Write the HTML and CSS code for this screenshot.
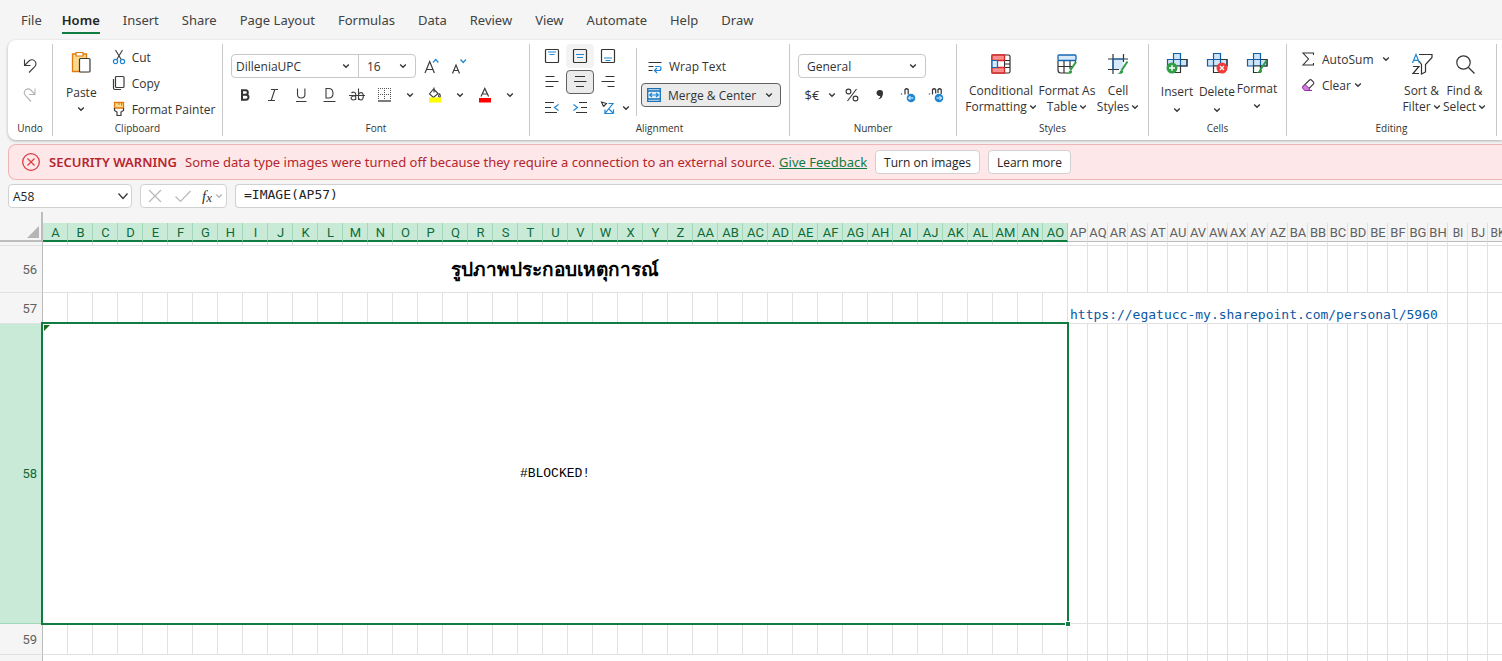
FILE: index.html
```html
<!DOCTYPE html>
<html lang="en">
<head>
<meta charset="utf-8">
<title>Workbook</title>
<link rel="stylesheet" href="styles.css">
</head>
<body>
<svg class="defs" aria-hidden="true">
  <symbol id="chev" viewBox="0 0 8 8"><path d="M1.2 2.5 4 5.3 6.8 2.5" fill="none" stroke="currentColor" stroke-width="1.3"/></symbol>
  <symbol id="cross" viewBox="0 0 22 22"><path d="M7.500 7.500V1.500h7v6H21v6.500H1.500V7.500z" fill="#cfe4f7"/><path d="M7.500 7.500V1.500h7v6H21v6.500H1.500V7.500zM7.500 7.500V14M14.500 7.500V14M7.500 7.500h7" fill="none" stroke="#0f5ea8" stroke-width="1.200"/><path d="M7.500 14v6.500h7V14z" fill="#fff" stroke="#333" stroke-width="1.200"/><path d="M14.500 7.500H21V14h-6.500" fill="none" stroke="#333" stroke-width="1.200"/></symbol>
</svg>

<nav class="tabs">
  <button class="tab">File</button>
  <button class="tab tab-active">Home</button>
  <button class="tab">Insert</button>
  <button class="tab">Share</button>
  <button class="tab">Page Layout</button>
  <button class="tab">Formulas</button>
  <button class="tab">Data</button>
  <button class="tab">Review</button>
  <button class="tab">View</button>
  <button class="tab">Automate</button>
  <button class="tab">Help</button>
  <button class="tab">Draw</button>
</nav>

<div class="ribbon">
  <section class="group">
    <div class="controls undo">
      <button class="tool" aria-label="Undo"><svg width="14" height="16" viewBox="0 0 14 16"><path d="M1.500 1.500v6h6M1.500 7.500 6 3c2-1.800 4.500-1.500 5.800 0 1.600 1.800 1.300 4 0 5.600L6 14.500" fill="none" stroke="#3b3b3b" stroke-width="1.100"/></svg></button>
      <button class="tool" aria-label="Redo"><svg width="14" height="16" viewBox="0 0 14 16"><path d="M12 1.500v6H6M12 7.500 7.800 3C6 1.500 4 1.800 2.500 3c-1.600 1.800-1.500 4 0 5.600L8 14.500" fill="none" stroke="#b4b4b4" stroke-width="1.100"/></svg></button>
    </div>
    <h2 class="caption">Undo</h2>
  </section>

  <section class="group">
    <div class="controls clipboard">
      <button class="big paste">
        <svg width="20" height="22" viewBox="0 0 20 22"><path d="M1.500 3h14v17.500h-14z" fill="#fbd98b" stroke="#e07b12" stroke-width="1.300"/><path d="M5 1.500h7v3.500H5z" fill="#fff" stroke="#e07b12" stroke-width="1.200"/><rect x="8.500" y="7.500" width="10.500" height="13.500" rx="1" fill="#fff" stroke="#3b3b3b" stroke-width="1.200"/></svg>
        <span>Paste</span>
        <svg class="chev"><use href="#chev"/></svg>
      </button>
      <div class="stack">
        <button class="row-tool"><svg width="14" height="16" viewBox="0 0 14 16"><path d="M3.500 1 9.500 11M10.500 1 4.500 11" stroke="#3b3b3b" stroke-width="1.100"/><circle cx="3.500" cy="12.500" r="2.100" fill="none" stroke="#1f86d2" stroke-width="1.200"/><circle cx="10.500" cy="12.500" r="2.100" fill="none" stroke="#1f86d2" stroke-width="1.200"/></svg>Cut</button>
        <button class="row-tool"><svg width="14" height="16" viewBox="0 0 14 16"><rect x="3.500" y="1.500" width="8.500" height="11" rx="1" fill="none" stroke="#3b3b3b" stroke-width="1.200"/><path d="M1.500 4v9q0 1.500 1.500 1.500h6" fill="none" stroke="#3b3b3b" stroke-width="1.200"/></svg>Copy</button>
        <button class="row-tool"><svg width="14" height="16" viewBox="0 0 14 16"><path d="M2.500 1.500h9v5.500h-9z" fill="#fbd98b" stroke="#e07b12" stroke-width="1.300"/><path d="M7 1.500v2.500M9.500 1.500v3" stroke="#e07b12"/><path d="M2.500 7v2.500L5 11v3.500h4V11l2.500-1.500V7" fill="none" stroke="#3b3b3b" stroke-width="1.200"/></svg>Format Painter</button>
      </div>
    </div>
    <h2 class="caption">Clipboard</h2>
  </section>

  <section class="group">
    <div class="controls two-rows">
      <div class="line">
        <div class="combo">
          <label class="pick pick-font"><select aria-label="Font name"><option>DilleniaUPC</option></select><svg class="chev"><use href="#chev"/></svg></label>
          <label class="pick pick-size"><select aria-label="Font size"><option>16</option></select><svg class="chev"><use href="#chev"/></svg></label>
        </div>
        <button class="tool" aria-label="Increase font size"><svg width="18" height="18" viewBox="0 0 18 18"><path d="M2 16 6.700 4.500 11.400 16M3.600 12.500h6.200" fill="none" stroke="#3b3b3b" stroke-width="1.200"/><path d="m10 5.500 2.700-3 2.700 3" fill="none" stroke="#1f86d2" stroke-width="1.200"/></svg></button>
        <button class="tool" aria-label="Decrease font size"><svg width="18" height="18" viewBox="0 0 18 18"><path d="M1.500 16.500 5 8 8.500 16.500M2.800 13.500h4.500" fill="none" stroke="#3b3b3b" stroke-width="1.200"/><path d="m9.500 2.500 2.700 3 2.700-3" fill="none" stroke="#1f86d2" stroke-width="1.200"/></svg></button>
      </div>
      <div class="line">
        <button class="tool" aria-label="Bold"><svg width="16" height="16" viewBox="0 0 16 16"><path d="M5 3.200h3.500a2.200 2.200 0 0 1 0 4.600H5zM5 7.800h4a2.400 2.400 0 0 1 0 5H5z" fill="none" stroke="#333" stroke-width="2"/></svg></button>
        <button class="tool" aria-label="Italic"><svg width="16" height="16" viewBox="0 0 16 16"><path d="M6 2.500h7M3 13.500h7M9.800 2.500l-3.600 11" fill="none" stroke="#3b3b3b" stroke-width="1.100"/></svg></button>
        <button class="tool" aria-label="Underline"><svg width="16" height="16" viewBox="0 0 16 16"><path d="M4.500 1.500v6q0 3.500 3.700 3.500t3.700-3.500v-6M3 14.500h10.500" fill="none" stroke="#3b3b3b" stroke-width="1.100"/></svg></button>
        <button class="tool" aria-label="Double underline"><svg width="16" height="16" viewBox="0 0 16 16"><path d="M5 1.500h2.500q4.500 0 4.500 4.700T7.500 11H5zM2.500 14.500h12" fill="none" stroke="#3b3b3b" stroke-width="1.100"/></svg></button>
        <button class="tool" aria-label="Strikethrough"><svg width="16" height="16" viewBox="0 0 16 16"><path d="M0 8.500h16M2.500 6q1-1 2.500-.8 1.700.2 1.700 2V13M6.700 8.700Q2 9 2 11.200 2.300 13 4.500 13q1.800-.2 2.200-1.700M9.500 1.500V13M9.500 7.500q.8-2 2.500-2 2.300.2 2.300 3.700T12 13q-1.800 0-2.500-2" fill="none" stroke="#3b3b3b" stroke-width="1.100"/></svg></button>
        <button class="tool" aria-label="Borders"><svg width="16" height="16" viewBox="0 0 16 16"><path d="M1.500 1v12M7.500 1v12M13.500 1v12M1 1.500h13M1 7.500h13" stroke="#555" stroke-dasharray="1 1"/><path d="M1 14h13" stroke="#333" stroke-width="1.300"/></svg></button>
        <button class="drop" aria-label="Border options"><svg class="chev"><use href="#chev"/></svg></button>
        <button class="tool" aria-label="Fill color"><svg width="16" height="16" viewBox="0 0 16 16"><path d="M7 .500v5M6.500 2 11 6.500 6.500 10.500 2.500 7zM12.500 6.500q1.300 2 .8 3.200-.8.900-1.700 0-.4-1.200.9-3.200" fill="none" stroke="#3b3b3b" stroke-width="1.100"/><path d="M2 10.500h12v5H2z" fill="#ff0"/></svg></button>
        <button class="drop" aria-label="Fill options"><svg class="chev"><use href="#chev"/></svg></button>
        <button class="tool" aria-label="Font color"><svg width="16" height="16" viewBox="0 0 16 16"><path d="M4 9.500 7.800 1.500l3.800 8M5.500 7h4.800" fill="none" stroke="#3b3b3b" stroke-width="1.200"/><path d="M2 11h12v4.500H2z" fill="#f00"/></svg></button>
        <button class="drop" aria-label="Font color options"><svg class="chev"><use href="#chev"/></svg></button>
      </div>
    </div>
    <h2 class="caption">Font</h2>
  </section>

  <section class="group">
    <div class="controls alignment">
      <div class="align-grid">
        <button class="tool" aria-label="Top align"><svg width="16" height="16" viewBox="0 0 16 16"><rect x="1.500" y="1.500" width="13" height="13" rx="1" fill="none" stroke="#333" stroke-width="1.200"/><path d="M4 4h8M5.500 6.500h5" stroke="#1f86d2" stroke-width="1.200"/></svg></button>
        <button class="tool tool-hover" aria-label="Middle align"><svg width="16" height="16" viewBox="0 0 16 16"><rect x="1.500" y="1.500" width="13" height="13" rx="1" fill="none" stroke="#333" stroke-width="1.200"/><path d="M4 6.500h8M5 9.500h6" stroke="#1f86d2" stroke-width="1.200"/></svg></button>
        <button class="tool" aria-label="Bottom align"><svg width="16" height="16" viewBox="0 0 16 16"><rect x="1.500" y="1.500" width="13" height="13" rx="1" fill="none" stroke="#333" stroke-width="1.200"/><path d="M4 10h8M5.500 12.500h5" stroke="#1f86d2" stroke-width="1.200"/></svg></button>
        <button class="tool" aria-label="Align left"><svg width="16" height="16" viewBox="0 0 16 16"><path d="M1.500 2.500h9M1.500 7.500h13M1.500 12.500h8" stroke="#333" stroke-width="1.100"/></svg></button>
        <button class="tool tool-on" aria-label="Center"><svg width="16" height="16" viewBox="0 0 16 16"><path d="M3 2.500h10M2 7.500h12.500M4 12.500h8" stroke="#333" stroke-width="1.100"/></svg></button>
        <button class="tool" aria-label="Align right"><svg width="16" height="16" viewBox="0 0 16 16"><path d="M5.500 2.500h9M1.500 7.500h13M7.500 12.500h7" stroke="#333" stroke-width="1.100"/></svg></button>
        <button class="tool" aria-label="Decrease indent"><svg width="16" height="16" viewBox="0 0 16 16"><path d="M1 2.500h9M1 7.500h6M1 12.500h12" stroke="#333" stroke-width="1.100"/><path d="M14.500 4.500 10.500 7.500l4 3" fill="none" stroke="#1f86d2" stroke-width="1.200"/></svg></button>
        <button class="tool" aria-label="Increase indent"><svg width="16" height="16" viewBox="0 0 16 16"><path d="M7 2.500h8M9 7.500h6M4 12.500h11" stroke="#333" stroke-width="1.100"/><path d="m1.500 4.500 4 3-4 3" fill="none" stroke="#1f86d2" stroke-width="1.200"/></svg></button>
        <button class="tool" aria-label="Orientation"><svg width="16" height="16" viewBox="0 0 16 16"><path d="M3.500 6.500 1.500 2l5 1.500L3.500 6.500" fill="none" stroke="#333" stroke-width="1.100"/><path d="M8.500 3.500h4.500L5 13.500H13.500M8.500 8.500l5 5M13.500 9.500v4M5 9.500v4" fill="none" stroke="#1f86d2" stroke-width="1.200"/></svg></button>
        <button class="drop orient-drop" aria-label="Orientation options"><svg class="chev"><use href="#chev"/></svg></button>
      </div>
      <div class="wrap-merge">
        <button class="row-tool wrap"><svg width="14" height="14" viewBox="0 0 14 14"><path d="M.500 2.500h13M.500 6.500h5M.500 10.500h4" stroke="#333" stroke-width="1.100"/><path d="M7 6.500h4q2 0 2 2t-2 2H7M9 8l-2.500 2.500L9 13" fill="none" stroke="#1f86d2" stroke-width="1.200"/></svg>Wrap Text</button>
        <button class="row-tool merge"><svg width="14" height="14" viewBox="0 0 14 14"><path d="M.700 3h12.600v8H.700z" fill="#e2f0fb"/><path d="M.700.700h12.600v12.600H.700zM.700 3h12.600M.700 11h12.600" fill="none" stroke="#1570b8" stroke-width="1.300"/><path d="M2.500 7h9M5 5 2.700 7 5 9M9 5l2.300 2L9 9" fill="none" stroke="#1f86d2" stroke-width="1.200"/></svg>Merge &amp; Center<svg class="chev"><use href="#chev"/></svg></button>
      </div>
    </div>
    <h2 class="caption">Alignment</h2>
  </section>

  <section class="group">
    <div class="controls two-rows">
      <div class="line">
        <label class="pick pick-number"><select aria-label="Number format"><option>General</option></select><svg class="chev"><use href="#chev"/></svg></label>
      </div>
      <div class="line">
        <button class="tool currency" aria-label="Currency">$€</button>
        <button class="drop drop-slim" aria-label="Currency options"><svg class="chev"><use href="#chev"/></svg></button>
        <button class="tool" aria-label="Percent"><svg width="16" height="16" viewBox="0 0 16 16"><circle cx="4.500" cy="4.500" r="2.400" fill="none" stroke="#333" stroke-width="1.100"/><circle cx="11.500" cy="11.500" r="2.400" fill="none" stroke="#333" stroke-width="1.100"/><path d="M12.500 2 3.500 14" stroke="#333" stroke-width="1.100"/></svg></button>
        <button class="tool" aria-label="Comma style"><svg width="16" height="16" viewBox="0 0 16 16"><path d="M8 3a3 3 0 1 0 .5 5.800Q8 11.200 6 12.500q5-1 5-6.500A3 3 0 0 0 8 3" fill="#333"/></svg></button>
        <button class="tool" aria-label="Increase decimal"><svg width="16" height="16" viewBox="0 0 16 16"><path d="M1.500 6.500v1" stroke="#333" stroke-width="1.300"/><path d="M5 7.500v-5q1.600-1.500 3.200 0V7.500" fill="none" stroke="#333" stroke-width="1.200"/><circle cx="11" cy="11" r="4.300" fill="#1f86d2"/><path d="M13.500 11h-5m2-2-2 2 2 2" fill="none" stroke="#fff"/></svg></button>
        <button class="tool" aria-label="Decrease decimal"><svg width="16" height="16" viewBox="0 0 16 16"><path d="M1.500 6.500v1" stroke="#333" stroke-width="1.300"/><path d="M4.500 7.500v-5q1.600-1.500 3.200 0V6.500M10 6V2.500q1.600-1.500 3.200 0V7" fill="none" stroke="#333" stroke-width="1.200"/><circle cx="11" cy="11" r="4.300" fill="#1f86d2"/><path d="M8.500 11h5m-2-2 2 2-2 2" fill="none" stroke="#fff"/></svg></button>
      </div>
    </div>
    <h2 class="caption">Number</h2>
  </section>

  <section class="group">
    <div class="controls bigs styles-set">
      <button class="big"><svg width="22" height="22" viewBox="0 0 22 22"><rect x="2" y="2" width="18" height="18" rx="1.500" fill="#fff" stroke="#333" stroke-width="1.200"/><path d="M14.500 2v18M14.500 11H20M14.500 7.500H20M14.500 14.500H20" stroke="#333" stroke-width="1.100"/><path d="M2 2h12.500v5.500H2zM2 14.500h12.500V20H2z" fill="#fb8f8f" stroke="#d42a2a" stroke-width="1.300"/><path d="M2 7.500h5.500v7H2z" fill="#d8eafa" stroke="#1468b3" stroke-width="1.200"/></svg><span>Conditional<br>Formatting<svg class="chev"><use href="#chev"/></svg></span></button>
      <button class="big"><svg width="22" height="22" viewBox="0 0 22 22"><path d="M2 7.500V17q0 3 3 3h3V7.500M2 13.500h15M8 20h4M14 7.500V16M19.500 7.500V10" fill="none" stroke="#333" stroke-width="1.200"/><rect x="2" y="2" width="18" height="5.500" rx="1" fill="#d8eafa" stroke="#1468b3" stroke-width="1.300"/><path d="m20 9-5.500 8" stroke="#2f9e44" stroke-width="2"/><path d="M10 20.500q3-.3 3-2.500 1.500-1.700 3 0 .8 3.800-6 2.500" fill="#2f9e44"/></svg><span>Format As<br>Table<svg class="chev"><use href="#chev"/></svg></span></button>
      <button class="big"><svg width="22" height="22" viewBox="0 0 22 22"><path d="M6 6h10.500v10.500H6z" fill="#d8eafa"/><path d="M6 1v20M1 6h20M16.500 1v8M1 16.500h11" stroke="#333" stroke-width="1.200"/><path d="M6 16.500V6h10.500" fill="none" stroke="#1468b3" stroke-width="1.200"/><path d="m20.500 8.500-6 9" stroke="#2f9e44" stroke-width="2"/><path d="M10 20.500q3-.3 3-2.500 1.500-1.700 3 0 .8 3.800-6 2.500" fill="#2f9e44"/></svg><span>Cell<br>Styles<svg class="chev"><use href="#chev"/></svg></span></button>
    </div>
    <h2 class="caption">Styles</h2>
  </section>

  <section class="group">
    <div class="controls bigs cells-set">
      <button class="big"><svg width="22" height="22" viewBox="0 0 22 22"><use href="#cross"/><circle cx="6" cy="16" r="5.500" fill="#2f9e44"/><path d="M6 13v6M3 16h6" stroke="#fff" stroke-width="1.300"/></svg><span>Insert</span><svg class="chev"><use href="#chev"/></svg></button>
      <button class="big"><svg width="22" height="22" viewBox="0 0 22 22"><use href="#cross"/><circle cx="16" cy="16" r="5.500" fill="#ee3b3b"/><path d="m14 14 4 4M18 14l-4 4" stroke="#fff" stroke-width="1.200"/></svg><span>Delete</span><svg class="chev"><use href="#chev"/></svg></button>
      <button class="big big-tight"><svg width="22" height="22" viewBox="0 0 22 22"><use href="#cross"/><path d="m20.500 8.500-6 9" stroke="#2f9e44" stroke-width="2"/><path d="M10 20.500q3-.3 3-2.500 1.500-1.700 3 0 .8 3.800-6 2.500" fill="#2f9e44"/></svg><span>Format</span><svg class="chev"><use href="#chev"/></svg></button>
    </div>
    <h2 class="caption">Cells</h2>
  </section>

  <section class="group">
    <div class="controls editing">
      <div class="stack edit-stack">
        <button class="row-tool sum"><svg width="14" height="16" viewBox="0 0 14 16"><path d="M12.500 4V2H2l5.500 6L2 14h10.500v-2" fill="none" stroke="#333" stroke-width="1.100"/></svg>AutoSum<svg class="chev"><use href="#chev"/></svg></button>
        <button class="row-tool clear"><svg width="14" height="16" viewBox="0 0 14 16"><path d="M2 9.500 8.500 3q1-.8 2 0l2 2q.7 1 0 2L7 12.500z" fill="#fff" stroke="#3b3b3b" stroke-width="1.100"/><path d="m4 7.500 5 4.500-2 1.500H3.500L1.500 11q-.3-1 .5-1.500z" fill="#cf7fd8" stroke="#9b2fae"/><path d="M4 13.500h7" stroke="#9b2fae"/></svg>Clear<svg class="chev"><use href="#chev"/></svg></button>
      </div>
      <button class="big"><svg width="22" height="22" viewBox="0 0 22 22"><path d="M8 1.500h13v3l-6.500 7v7.500l-4 2V11.500L8 8" fill="none" stroke="#333" stroke-width="1.200"/><path d="M1.500 10 5 1.500 8.500 10M2.800 7.300h4.500" fill="none" stroke="#1f86d2" stroke-width="1.200"/><path d="M2 13.500h6L2 20.500h6" fill="none" stroke="#333" stroke-width="1.200"/></svg><span>Sort &amp;<br>Filter<svg class="chev"><use href="#chev"/></svg></span></button>
      <button class="big"><svg width="22" height="22" viewBox="0 0 22 22"><circle cx="9.500" cy="9.500" r="6.700" fill="none" stroke="#333" stroke-width="1.200"/><path d="m14.500 14.500 6 6" stroke="#333" stroke-width="1.200"/></svg><span>Find &amp;<br>Select<svg class="chev"><use href="#chev"/></svg></span></button>
    </div>
    <h2 class="caption">Editing</h2>
  </section>
</div>

<div class="warning" role="alert">
  <svg width="20" height="20" viewBox="0 0 20 20"><circle cx="10" cy="10" r="8.300" fill="none" stroke="#e0393e" stroke-width="1.300"/><path d="m6.500 6.500 7 7M13.500 6.500l-7 7" stroke="#e0393e" stroke-width="1.200"/></svg>
  <strong>SECURITY WARNING</strong>
  <span class="message">Some data type images were turned off because they require a connection to an external source.</span>
  <a href="#">Give Feedback</a>
  <button class="warn-btn">Turn on images</button>
  <button class="warn-btn">Learn more</button>
</div>

<div class="formula-bar">
  <label class="name-box"><input aria-label="Name box" value="A58"><svg width="12" height="12" viewBox="0 0 12 12"><path d="m1.500 3.500 4.500 5 4.500-5" fill="none" stroke="#333" stroke-width="1.200"/></svg></label>
  <div class="fx-box">
    <button aria-label="Cancel"><svg width="16" height="16" viewBox="0 0 16 16"><path d="m2 2 12 12M14 2 2 14" stroke="#b8b8b8" stroke-width="1.200"/></svg></button>
    <button aria-label="Enter"><svg width="18" height="16" viewBox="0 0 18 16"><path d="m1.500 8.500 5 5L16.500 3" fill="none" stroke="#b8b8b8" stroke-width="1.200"/></svg></button>
    <button aria-label="Insert function" class="fx"><i>f</i><i class="fx-x">x</i><svg class="chev"><use href="#chev"/></svg></button>
  </div>
  <input class="formula" aria-label="Formula" value="=IMAGE(AP57)">
</div>

<main class="sheet"><table class="cells" id="cells"></table></main>
<script src="sheet.js"></script>
</body>
</html>
```
FILE: styles.css
```css
* { box-sizing: border-box; }
body {
  margin: 0;
  height: 100vh;
  overflow: hidden;
  display: flex;
  flex-direction: column;
  background: #f5f5f5;
  color: #333;
  font-family: "Open Sans", "Noto Sans", sans-serif;
  font-size: 12px;
}
button, input, select { font: inherit; color: inherit; }
button { border: 0; padding: 0; background: none; white-space: nowrap; }
svg { display: block; flex: none; }
.defs { position: absolute; width: 0; height: 0; }
.chev { width: 8px; height: 8px; flex: none; }

.tabs { display: flex; flex: none; height: 40px; padding-left: 21px; gap: 23px; font-family: "Noto Sans", sans-serif; font-size: 13px; color: #424242; }
.tab { height: 34px; padding-top: 6px; }
.tab-active { font-weight: 600; color: #242424; border-bottom: 2px solid #107c41; padding-top: 8px; margin-left: -3px; }

.ribbon {
  display: grid;
  grid-template-columns: 45px 170px 307px 260px 167px 192px 138px 210px;
  flex: none;
  height: 100px;
  margin-left: 8px;
  padding: 4px 0;
  background: #fff;
  border-radius: 8px 0 0 8px;
  box-shadow: 0 1px 3px rgba(0, 0, 0, .3);
}
.group { display: flex; flex-direction: column; justify-content: space-between; border-right: 1px solid #c8c8c8; }
.caption { margin: 0; font-size: 10px; font-weight: 400; line-height: 16px; text-align: center; }
.controls { display: flex; height: 76px; }
.tool { display: flex; align-items: center; justify-content: center; width: 28px; height: 24px; border-radius: 4px; }
.drop { display: flex; align-items: center; justify-content: center; width: 22px; height: 24px; }
.drop-slim { width: 12px; }
.row-tool { display: flex; flex: none; align-items: center; height: 26px; gap: 7px; text-align: left; }
.stack { display: flex; flex-direction: column; }
.line { display: flex; align-items: center; height: 24px; }
.two-rows { flex-direction: column; gap: 5px; padding: 10px 0 0 8px; }

.undo { flex-direction: column; align-items: center; gap: 5px; padding-top: 10px; }
.big { display: flex; flex-direction: column; align-items: center; line-height: 16px; }
.big span { display: block; }
.big span .chev { display: inline-block; margin-left: 2px; }

.clipboard { padding-left: 13px; gap: 15px; }
.clipboard .row-tool { gap: 6px; }
.paste { padding-top: 7px; gap: 12px; }
.paste .chev { margin-top: -8px; }

.combo { display: flex; margin-right: 2px; border: 1px solid #c8c8c8; border-radius: 4px; }
.pick { position: relative; display: flex; align-items: center; height: 22px; }
.pick select { appearance: none; width: 100%; height: 100%; border: 0; padding: 0 8px 0 4px; background: none; outline: 0; }
.pick .chev { position: absolute; right: 8px; }
.pick-font { width: 126px; }
.pick-size { width: 57px; border-left: 1px solid #c8c8c8; }
.pick-size select { padding-left: 8px; }
.pick-number { width: 128px; height: 24px; border: 1px solid #c8c8c8; border-radius: 4px; }
.pick-number select { padding-left: 8px; }
.currency { font-size: 13px; }

.alignment { padding-left: 8px; }
.align-grid { display: grid; grid-template-columns: 28px 28px 28px 14px; grid-auto-rows: 24px; gap: 2px 0; }
.orient-drop { width: 8px; grid-column: 4; grid-row: 3; }
.align-grid .tool:nth-child(3n + 1) { grid-column: 1; }
.tool-hover { background: #f3f3f3; }
.tool-on { background: #ebebeb; border: 1px solid #616161; }
.wrap-merge { display: flex; flex-direction: column; gap: 4px; height: 68px; margin-top: 4px; padding: 6px 0 0 4px; border-left: 1px solid #c8c8c8; }
.wrap { height: 25px; padding-left: 7px; }
.merge { height: 24px; width: 140px; padding: 0 7px 0 5px; background: #ebebeb; border: 1px solid #616161; border-radius: 4px; }
.merge .chev { margin-left: auto; }

.bigs .big { padding-top: 9px; gap: 8px; }
.styles-set { padding-left: 8px; }
.styles-set .big:nth-child(1) { width: 72px; }
.styles-set .big:nth-child(2) { width: 60px; }
.styles-set .big:nth-child(3) { width: 42px; }
.cells-set { padding-left: 8px; }
.cells-set .big { width: 40px; gap: 10px; padding-top: 8px; }
.cells-set .big .chev { margin-top: -4px; }
.cells-set .big-tight { gap: 7px; }
.cells-set .big-tight .chev { margin-top: -2px; }

.editing { padding-left: 14px; }
.edit-stack { width: 99px; padding-top: 2px; }
.sum { width: 89px; }
.sum .chev { margin-left: auto; }
.clear .chev { margin-left: -4px; }
.editing > .big { width: 43px; padding-top: 9px; gap: 8px; }

.warning {
  display: flex;
  align-items: center;
  flex: none;
  height: 36px;
  margin: 4px 0 4px 8px;
  padding-left: 12px;
  gap: 8px;
  white-space: nowrap;
  font-family: "Noto Sans", sans-serif;
  font-size: 13px;
  color: #b3262d;
  background: #fde7e9;
  border: 1px solid #f1b5b8;
  border-right: 0;
  border-radius: 8px 0 0 8px;
}
.warning strong { font-weight: 600; }
.message { margin-right: -4px; }
.warning a { color: #107c41; }
.warn-btn { height: 24px; padding: 0 8px; font-family: "Open Sans", sans-serif; font-size: 12px; color: #242424; background: #fff; border: 1px solid #d1d1d1; border-radius: 4px; }

.formula-bar { display: flex; flex: none; height: 24px; margin-left: 8px; gap: 8px; }
.name-box, .fx-box, .formula { display: flex; align-items: center; background: #fff; border: 1px solid #d1d1d1; border-radius: 4px; }
.name-box { width: 124px; padding: 0 2px 0 4px; color: #242424; }
.name-box input { flex: 1; min-width: 0; border: 0; padding: 0; background: none; }
.fx-box { width: 87px; padding: 0 3px 0 6px; justify-content: space-between; }
.fx { display: flex; align-items: center; font: 15px "Liberation Serif", serif; }
.fx-x { padding-top: 4px; font-size: 13px; }
.fx .chev { margin-left: 3px; color: #b8b8b8; }
.formula { flex: 1; min-width: 0; padding: 0 8px 3px; border-right: 0; border-radius: 4px 0 0 4px; font: 13px "DejaVu Sans Mono", monospace; color: #242424; }

.sheet { flex: 1; min-height: 0; margin-top: 4px; overflow: hidden; }
.cells { table-layout: fixed; width: 1508px; border-collapse: separate; border-spacing: 0; font-family: Roboto, sans-serif; font-size: 13px; }
.cells th, .cells td { padding: 0; border: 0 solid #e1e1e1; border-width: 0 1px 1px 0; background: #fff; }
.cells th { font-weight: 400; color: #616161; background: #f5f5f5; }
.col-corner { width: 43px; }
.col-wide { width: 25px; }
.col-narrow { width: 20px; }
.cells thead th { height: 30px; border: 0; vertical-align: bottom; }
.letter { height: 19px; padding-left: 1px; line-height: 20px; border-right: 1px solid #e1e1e1; border-bottom: 1px solid #bdbdbd; overflow: hidden; }
.letter-on { color: #0e6b38; background: #caead8; border-right-color: #a0d8b9; border-bottom: 2px solid #107c41; }
.letter-small { font-size: 12px; }
.cells thead .corner { border-right: 2px solid #bdbdbd; border-bottom: 2px solid #bdbdbd; }
.corner svg { margin: 0 2px 2px auto; }
.cells .row-head { text-align: right; padding-right: 5px; border-right-color: #bdbdbd; }
.cells .row-head-on { color: #0e6b38; background: #caead8; border-bottom-color: #a0d8b9; }
.h4 { height: 4px; }
.h31 { height: 31px; }
.h47 { height: 47px; }
.h300 { height: 300px; }
.title { text-align: center; font: 700 19px/24px "Noto Sans", sans-serif; color: #000; }
.cells .link { vertical-align: bottom; overflow: hidden; white-space: nowrap; padding-left: 2px; font: 13px/16px "DejaVu Sans Mono", monospace; }
.link a { color: #0b57a4; text-decoration: none; }
.cells .selected { position: relative; text-align: center; font: 13px "Liberation Mono", monospace; color: #000; }
.frame { position: absolute; inset: -2px; border: 2px solid #107c41; pointer-events: none; }
.flag { position: absolute; top: 1px; left: 1px; border: 3px solid #1a6b1a; border-right-color: transparent; border-bottom-color: transparent; }
.handle { position: absolute; right: -4px; bottom: -4px; width: 6px; height: 6px; background: #107c41; border: 1px solid #fff; }
```
FILE: sheet.js
```js
const WIDE = 41;
const TOTAL = 63;
const LINK_SPAN = 19;

const letters = n => (n >= 26 ? String.fromCharCode(64 + Math.floor(n / 26)) : '') + String.fromCharCode(65 + n % 26);
const blanks = n => '<td></td>'.repeat(n);
const row = (height, head, body, cls = '') =>
  `<tr class="${height}"><th class="row-head ${cls}" scope="row">${head}</th>${body}</tr>`;

const cols = '<col class="col-corner">' +
  '<col class="col-wide">'.repeat(WIDE) +
  '<col class="col-narrow">'.repeat(TOTAL - WIDE);

let heads = '<th class="corner"><svg width="12" height="12" viewBox="0 0 12 12"><path d="M12 0v12H0z" fill="#b5b5b5"/></svg></th>';
for (let i = 0; i < TOTAL; i++) {
  const kind = i < WIDE ? 'letter-on' : i >= WIDE + LINK_SPAN ? 'letter-small' : '';
  heads += `<th scope="col"><div class="letter ${kind}">${letters(i)}</div></th>`;
}

const rest = blanks(TOTAL - WIDE);
document.getElementById('cells').innerHTML =
  `<colgroup>${cols}</colgroup><thead><tr>${heads}</tr></thead><tbody>` +
  row('h4', '', blanks(TOTAL)) +
  row('h47', '56', `<td class="title" colspan="${WIDE}" lang="th">รูปภาพประกอบเหตุการณ์</td>${rest}`) +
  row('h31', '57', blanks(WIDE) +
    `<td class="link" colspan="${LINK_SPAN}"><a href="#">https://egatucc-my.sharepoint.com/personal/5960</a></td>` +
    blanks(TOTAL - WIDE - LINK_SPAN)) +
  row('h300', '58', `<td class="selected" colspan="${WIDE}">#BLOCKED!<span class="frame"><span class="flag"></span><span class="handle"></span></span></td>${rest}`, 'row-head-on') +
  row('h31', '59', blanks(TOTAL)) +
  row('h31', '', `<td colspan="${WIDE}"></td>${rest}`) +
  '</tbody>';
```
